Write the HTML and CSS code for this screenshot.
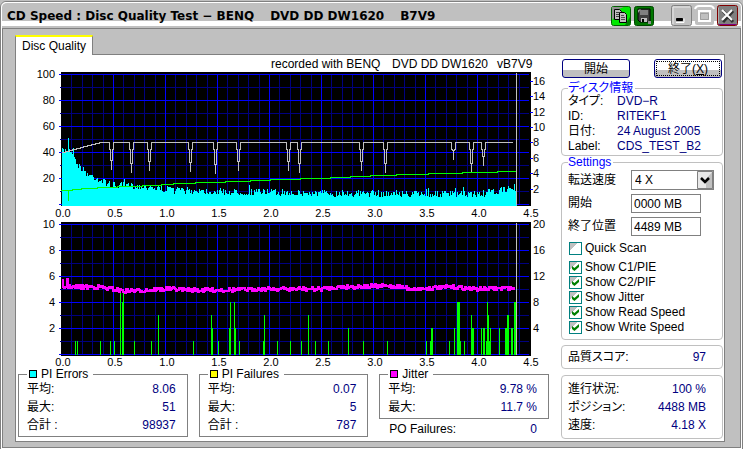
FILE: index.html
```html
<!DOCTYPE html>
<html lang="ja">
<head>
<meta charset="utf-8">
<title>CD Speed : Disc Quality Test</title>
<link rel="stylesheet" href="styles.css">
</head>
<body>
<div class="window">
  <header class="titlebar">
    <h1 class="title"><span>CD Speed : Disc Quality Test − BENQ</span><span>DVD DD DW1620</span><span>B7V9</span></h1>
    <div class="tools">
      <button class="tool" type="button" aria-label="Copy">
        <svg width="20" height="20" viewBox="0 0 20 20">
          <rect x="0.5" y="0.5" width="19" height="19" rx="2" fill="#00e800" stroke="#006000"/>
          <path d="M1 1h12l-8 3-2 8-2 2z" fill="#909090"/>
          <path d="M14 19h5v-8z" fill="#008000"/>
          <path d="M3.500 3.500h5l2 2v8h-7z" fill="#c0c0c0" stroke="#000"/>
          <path d="M5 6.500h3M5 8.500h3M5 10.500h3" stroke="#404040"/>
          <path d="M8.500 6.500h5l2 2v8h-7z" fill="#c0c0c0" stroke="#000"/>
          <path d="M10 9.500h3M10 11.500h4M10 13.500h4" stroke="#505050"/>
        </svg>
      </button>
      <button class="tool" type="button" aria-label="Save">
        <svg width="20" height="20" viewBox="0 0 20 20">
          <rect x="0.500" y="0.500" width="19" height="19" rx="2" fill="#007800" stroke="#004800"/>
          <path d="M4 3h12v13H6l-2-2z" fill="#404040" stroke="#000"/>
          <path d="M6 4h8v5H6z" fill="#808080"/>
          <path d="M7 12h6v4H7z" fill="#c0c0c0"/>
          <path d="M8 13h2v3H8z" fill="#000"/>
          <path d="M14 15h3v3h-3z" fill="#909090"/>
          <path d="M4 4l3-1-3 4z" fill="#a0a0a0"/>
        </svg>
      </button>
    </div>
    <div class="controls">
      <button class="tool" type="button" aria-label="Minimize">
        <svg width="21" height="21" viewBox="0 0 21 21">
          <rect x="0.500" y="0.500" width="20" height="20" rx="2" fill="#c0c0c0" stroke="#808080"/>
          <path d="M2 19V2h17" fill="none" stroke="#e8e8e8"/>
          <path d="M5.500 13.500h6v2h-6z" fill="#000" stroke="#000"/>
          <path d="M5 17.500h8v-4" fill="none" stroke="#fff"/>
        </svg>
      </button>
      <button class="tool" type="button" aria-label="Maximize" disabled>
        <svg width="21" height="21" viewBox="0 0 21 21">
          <rect x="1" y="1" width="19" height="19" rx="2" fill="#c0c0c0"/>
          <path d="M1 4q1-3 4-3h11q3 0 4 3" fill="none" stroke="#fff" stroke-width="2"/>
          <path d="M5 6h11v10H5z" fill="none" stroke="#fff" stroke-width="2"/>
          <path d="M6.500 8.500h8v6h-8z" fill="none" stroke="#a0a0a0"/>
        </svg>
      </button>
      <button class="tool" type="button" aria-label="Close">
        <svg width="21" height="21" viewBox="0 0 21 21">
          <rect x="0.500" y="0.500" width="20" height="20" rx="2" fill="#808080" stroke="#800000"/>
          <path d="M2 19.500h17" stroke="#800080"/>
          <path d="M1.500 3v15" stroke="#b0b0b0"/>
          <path d="M6 6l10 11M16 6L6 17" stroke="#303030" stroke-width="3"/>
          <path d="M5 5l10 10M15 5L5 15" stroke="#fff" stroke-width="2"/>
        </svg>
      </button>
    </div>
  </header>

  <div class="client">
    <button class="tab" type="button">Disc Quality</button>
    <main class="panel">
      <div class="results">
        <svg class="charts" id="charts" viewBox="16 55 540 313" role="img" aria-label="PI Errors, PI Failures and Jitter"></svg>
        <div class="stats">
          <fieldset class="stat">
            <legend><span class="swatch cyan"></span>PI Errors</legend>
            <dl>
              <dt>平均:</dt><dd>8.06</dd>
              <dt>最大:</dt><dd>51</dd>
              <dt>合計 :</dt><dd>98937</dd>
            </dl>
          </fieldset>
          <fieldset class="stat">
            <legend><span class="swatch yellow"></span>PI Failures</legend>
            <dl>
              <dt>平均:</dt><dd>0.07</dd>
              <dt>最大:</dt><dd>5</dd>
              <dt>合計 :</dt><dd>787</dd>
            </dl>
          </fieldset>
          <div>
            <fieldset class="stat">
              <legend><span class="swatch magenta"></span>Jitter</legend>
              <dl>
                <dt>平均:</dt><dd>9.78 %</dd>
                <dt>最大:</dt><dd>11.7 %</dd>
              </dl>
            </fieldset>
            <dl class="po">
              <dt>PO Failures:</dt><dd>0</dd>
            </dl>
          </div>
        </div>
      </div>

      <aside class="side">
        <div class="buttons">
          <button class="push" type="button">開始</button>
          <button class="push exit" type="button">終了(<u>X</u>)</button>
        </div>
        <fieldset class="group">
          <legend>ディスク情報</legend>
          <dl class="info">
            <dt>タイプ:</dt><dd>DVD−R</dd>
            <dt>ID:</dt><dd>RITEKF1</dd>
            <dt>日付:</dt><dd>24 August 2005</dd>
            <dt>Label:</dt><dd>CDS_TEST_B2</dd>
          </dl>
        </fieldset>
        <fieldset class="group">
          <legend>Settings</legend>
          <div class="fields">
            <label for="speed">転送速度</label>
            <span class="combo">
              <select id="speed"><option>4 X</option></select>
              <svg class="arrow" width="16" height="18" viewBox="0 0 16 18"><rect width="16" height="18" fill="#c0c0c0"/><path d="M0 18V0h16L9 8v10z" fill="#e8e8e8"/><path d="M0.500 0.500h15v17h-15z" fill="none" stroke="#808080"/><path d="M4 7l4 4 4-4" fill="none" stroke="#000" stroke-width="2.500"/></svg>
            </span>
            <label for="start">開始</label>
            <input class="text" id="start" type="text" value="0000 MB">
            <label for="end">終了位置</label>
            <input class="text" id="end" type="text" value="4489 MB">
          </div>
          <label class="check"><input type="checkbox">Quick Scan</label>
          <div class="checks">
            <label class="check"><input type="checkbox" checked>Show C1/PIE</label>
            <label class="check"><input type="checkbox" checked>Show C2/PIF</label>
            <label class="check"><input type="checkbox" checked>Show Jitter</label>
            <label class="check"><input type="checkbox" checked>Show Read Speed</label>
            <label class="check"><input type="checkbox" checked>Show Write Speed</label>
          </div>
        </fieldset>
        <dl class="group box score">
          <dt>品質スコア:</dt><dd>97</dd>
        </dl>
        <dl class="group box">
          <dt>進行状況:</dt><dd>100 %</dd>
          <dt>ポジション:</dt><dd>4488 MB</dd>
          <dt>速度:</dt><dd>4.18 X</dd>
        </dl>
      </aside>
    </main>
  </div>
</div>
<script src="charts.js"></script>
</body>
</html>
```
FILE: styles.css
```css
* { box-sizing: border-box; }

body {
  margin: 0;
  background: #c0c0c0;
  color: #000;
  font: 12px/15px "Liberation Sans", "Noto Sans CJK JP", sans-serif;
  font-feature-settings: "palt";
}

button, input, select { font: inherit; color: inherit; }
dl, dd, h1, fieldset, legend { margin: 0; padding: 0; }
dd { color: #000080; }

.window {
  margin-top: 1px;
  padding: 0 1px 1px;
  border: 1px solid #808080;
  border-radius: 6px 6px 0 0;
  background: #fff;
}

.titlebar {
  display: flex;
  align-items: center;
  height: 26px;
  padding: 2px 3px 0 5px;
  border-top: 1px solid #fff;
  border-bottom: 2px solid #c0c0c0;
  border-radius: 5px 5px 0 0;
  background: linear-gradient(#c0c0c0 18px, #fff 18px);
}

.title {
  display: flex;
  flex: 1;
  gap: 16px;
  font: bold 12px/20px "DejaVu Sans", sans-serif;
  white-space: nowrap;
}

.tools, .controls { display: flex; gap: 3px; }
.controls { gap: 2px; margin-left: 17px; }

.tool {
  display: block;
  padding: 0;
  border: 0;
  background: none;
}
.tool svg { display: block; }

.client {
  padding: 6px 15px 5px 12px;
  border: 1px solid #808080;
  background: #c0c0c0;
}

.tab {
  display: block;
  position: relative;
  height: 20px;
  margin-bottom: -1px;
  padding: 0 6px;
  border: 1px solid #808080;
  border-top: 2px solid #ff0;
  border-bottom: 0;
  background: #fff;
  line-height: 16px;
}

.panel {
  display: flex;
  border: 1px solid #808080;
  background: #fff;
}

.results { flex: 1; min-width: 0; }

.charts {
  display: block;
  width: 100%;
  overflow: visible;
  font-size: 12px;
}

.stats {
  display: grid;
  grid-template-columns: repeat(3, 1fr);
  align-items: start;
  gap: 11px;
  padding: 0 7px 2px 2px;
}

.stat {
  min-width: 0;
  padding: 0 11px 2px 8px;
  border: 1px solid #808080;
}

.stat legend {
  display: flex;
  align-items: center;
  gap: 4px;
  padding-right: 5px;
  line-height: 12px;
}

.swatch {
  width: 8px;
  height: 8px;
  margin-left: 2px;
  border: 1px solid #000;
}
.cyan { background: #0ff; }
.yellow { background: #ff0; }
.magenta { background: #f0f; }

.stat dl, .po, .box {
  display: grid;
  grid-template-columns: auto 1fr;
  grid-auto-rows: 18px;
  line-height: 18px;
}
.stat dd, .po dd, .box dd { text-align: right; }
.po { padding: 1px 12px 0 10px; }

.side {
  flex: 0 0 168px;
  padding: 4px 1px 2px 5px;
}

.buttons {
  display: flex;
  justify-content: space-between;
  margin-bottom: 4px;
  padding: 0 1px;
}

.push {
  width: 68px;
  height: 19px;
  padding: 0;
  border: 1px solid #000080;
  border-radius: 3px;
  background: linear-gradient(#fff 10px, #c0c0c0 10px);
  line-height: 16px;
}
.exit { outline: 1px dotted #000; outline-offset: -3px; }

.group {
  min-width: 0;
  padding: 0 5px 1px 6px;
  border: 1px solid #c0c0c0;
  border-radius: 4px;
}
.group legend {
  padding-right: 2px;
  color: #00f;
  line-height: 12px;
}

.info {
  display: grid;
  grid-template-columns: 49px 1fr;
  grid-auto-rows: 15px;
}

.fields {
  display: grid;
  grid-template-columns: 63px 1fr;
  align-items: center;
  row-gap: 4px;
  margin-bottom: 5px;
  padding-top: 2px;
}

.combo {
  display: flex;
  position: relative;
  width: 83px;
}
.combo select {
  width: 100%;
  height: 20px;
  padding: 0 3px;
  border: 1px solid #808080;
  border-radius: 0;
  background: #fff;
  appearance: none;
}
.arrow {
  position: absolute;
  top: 1px;
  right: 1px;
  pointer-events: none;
}

.text {
  width: 70px;
  height: 19px;
  padding: 0 2px;
  border: 1px solid #808080;
  background: #fff;
}

.check {
  display: flex;
  align-items: center;
  gap: 3px;
  height: 15px;
}
.check input {
  width: 13px;
  height: 13px;
  margin: 0 0 0 1px;
  border: 1px solid #008080;
  background: linear-gradient(135deg, #c0c0c0 36%, #fff 36%);
  appearance: none;
}
.check input:checked::before {
  content: "";
  display: block;
  width: 7px;
  height: 7px;
  margin: 2px;
  background: #008000;
  clip-path: polygon(0 30%, 35% 58%, 100% 0, 100% 42%, 35% 100%, 0 72%);
}
.checks { padding: 4px 0 3px; }

.box {
  margin-top: 6px;
  padding: 4px 16px 4px 6px;
}
.score {
  margin-top: 5px;
  padding: 2px 16px 2px 6px;
}

.plot { fill: #000; }
.major { stroke: #00f; }
.minor { stroke: #000080; }
.cursor { stroke: #c0c0c0; }
.errors { fill: #0ff; }
.fails { stroke: #0f0; }
.write { fill: none; stroke: #c0c0c0; }
.read { fill: none; stroke: #0f0; }
.jitter { fill: none; stroke: #f0f; stroke-width: 2; }
.axis { font-size: 11px; }
.right { text-anchor: end; }
.center { text-anchor: middle; }
```
FILE: charts.js
```js
const svg = document.getElementById('charts');
const LEFT = 61;
const STEP = 52;

function add(name, attrs, text) {
  const el = document.createElementNS('http://www.w3.org/2000/svg', name);
  for (const key in attrs) el.setAttribute(key, attrs[key]);
  if (text !== undefined) el.textContent = text;
  svg.appendChild(el);
}

function path(d, cls) {
  add('path', { d: d, class: cls, 'shape-rendering': 'crispEdges' });
}

let seed = 7;
function random() {
  seed = (seed * 16807) % 2147483647;
  return seed / 2147483647;
}

// Value at x on a polyline given as [x, y] pairs.
function at(points, x) {
  for (let i = 1; i < points.length; i++) {
    if (x <= points[i][0]) {
      const [x0, y0] = points[i - 1];
      const [x1, y1] = points[i];
      return y0 + (y1 - y0) * (x - x0) / (x1 - x0);
    }
  }
  return points[points.length - 1][1];
}

// Black plot area with its grid; zero is the pixel row of the value 0.
function grid(zero) {
  add('rect', { x: LEFT, y: zero - 132, width: 470, height: 134, class: 'plot' });
  let minor = '';
  let major = '';
  for (let i = 1; i < 45; i++) {
    const x = LEFT + Math.round(i * 10.4) + 0.5;
    if (i % 5) minor += `M${x} ${zero - 130}V${zero + 1}`;
    else major += `M${x} ${zero - 130}V${zero + 1}`;
  }
  for (let i = 0; i <= 10; i++) {
    const y = zero - i * 13 + 0.5;
    if (i % 2) minor += `M60 ${y}H529`;
    else major += `M59 ${y}H529`;
  }
  path(minor, 'minor');
  path(major, 'major');
}

function bottomLabels(y) {
  for (let i = 0; i <= 9; i++) {
    add('text', { x: 63 + i * STEP, y: y, class: 'axis center' }, (i / 2).toFixed(1));
  }
}

add('text', { x: 271, y: 68 }, 'recorded with BENQ');
add('text', { x: 392, y: 68 }, 'DVD DD DW1620');
add('text', { x: 497, y: 68 }, 'vB7V9');

grid(204);
[20, 40, 60, 80, 100].forEach((v, i) => {
  add('text', { x: 55, y: 182 - i * 26, class: 'axis right' }, v);
});
let ticks = '';
for (let v = 2; v <= 16; v += 2) {
  const y = Math.round(204 - v * 7.7);
  ticks += `M530 ${y + 0.5}h3`;
  add('text', { x: 533, y: y + 4, class: 'axis' }, v);
}
path(ticks, 'major');
bottomLabels(217);

const level = [[62,151],[68,150],[73,151],[77,165],[80,167],[84,171],[88,175],[95,177],[103,182],[112,185],[130,186],[150,187],[170,190],[200,191],[230,192],[260,192],[300,193],[400,194],[480,194],[500,191],[510,188],[517,187]];
let area = 'M62 206';
for (let x = 62; x < 517; x++) {
  let y = Math.round(at(level, x) + (random() - 0.5) * 7);
  if (random() > 0.94) y -= 4;
  if (x === 68) y = 138;
  area += `V${y}H${x + 1}`;
}
path(area + 'V206z', 'errors');

const dips = [[111,170],[131,173],[149,171],[190,172],[215,174],[238,171],[288,171],[299,173],[361,171],[385,173],[453,160],[471,173],[483,166]];
let write = 'M62 152.500h3v-1h4v-1h3v-1h4v-1h4v-1h3v-1h4v-1h4v-1h4v-1h4v-1';
for (const [x, y] of dips) {
  write += `H${x - 1.5}v7h1V${y - 10}h1V${y}V${y - 10}h1V149.500h1V142.500`;
}
path(write + 'H513', 'write');

const speed = [[62,190],[72,189],[90,188],[105,187],[130,186],[155,185],[180,183],[240,181],[280,179],[320,178],[380,175],[445,173],[515,171]];
let read = 'M61 190.500H68.500V201V190.500H72';
for (let x = 73; x <= 515; x++) read += `V${Math.round(at(speed, x)) + 0.5}H${x + 0.5}`;
path(read, 'read');
path('M516.500 73V205', 'cursor');

grid(354);
[2, 4, 6, 8, 10].forEach((v, i) => {
  add('text', { x: 55, y: 332 - i * 26, class: 'axis right' }, v);
  add('text', { x: 533, y: 332 - i * 26, class: 'axis' }, v * 2);
});
bottomLabels(366);

// [x, failures]
const fails = [[75,1],[77,1],[100,1],[110,1],[114,1],[120,5],[122,4],[123,5],[134,1],[151,1],[158,3],[193,1],[211,3],[212,2],[218,1],[229,2],[230,4],[234,4],[235,2],[239,1],[263,1],[264,3],[277,1],[290,1],[301,1],[308,3],[315,1],[328,1],[348,2],[363,1],[387,1],[426,1],[430,1],[431,2],[432,2],[449,1],[454,2],[457,4],[458,4],[459,4],[460,1],[464,1],[471,3],[472,2],[473,2],[481,2],[483,2],[484,2],[486,1],[487,4],[488,3],[489,1],[490,2],[499,2],[505,2],[506,2],[507,3],[508,3],[511,2],[512,2],[514,4],[515,4]];
path(fails.map(([x, n]) => `M${x + 0.5} 355V${354 - n * 13}`).join(''), 'fails');

const wave = [[62,287],[100,287],[112,289],[125,291],[150,290],[165,289],[200,290],[230,290],[260,289],[290,289],[320,289],[340,287],[395,286],[415,289],[435,288],[455,287],[475,289],[515,288]];
let jitter = 'M62.500 279V288';
for (let x = 63; x <= 515; x++) {
  const y = x === 68 ? 279 : Math.round(at(wave, x) + (random() - 0.5) * 4);
  jitter += `V${y}H${x}`;
}
path(jitter, 'jitter');
path('M516.500 223V355', 'cursor');
```
